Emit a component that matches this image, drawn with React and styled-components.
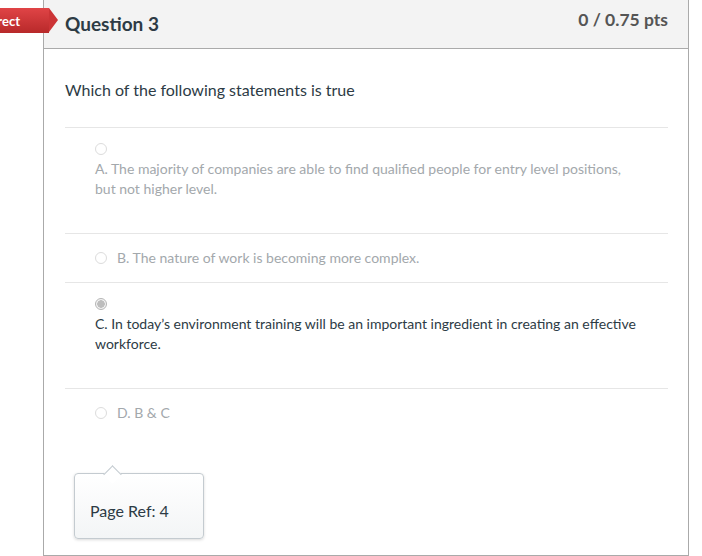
import React from 'react';
import styled, { createGlobalStyle } from 'styled-components';

const GlobalStyle = createGlobalStyle`
  html, body {
    margin: 0;
    padding: 0;
    background: #fff;
    font-family: Lato, "Open Sans", "Liberation Sans", sans-serif;
    color: #2d3b45;
  }
`;

const Page = styled.div`
  position: relative;
  width: 702px;
  height: 556px;
  overflow: hidden;
`;

const Card = styled.div`
  margin-left: 43px;
  width: 646px;
  height: 556px;
  box-sizing: border-box;
  border: 1px solid #aaaaaa;
  border-top: none;
  display: flex;
  flex-direction: column;
`;

const Header = styled.div`
  height: 49px;
  box-sizing: border-box;
  background: #f3f3f3;
  border-bottom: 1px solid #aaaaaa;
  display: flex;
  align-items: center;
  justify-content: space-between;
  padding: 0 20px 0 21px;
`;

const Title = styled.h2`
  margin: -2px 0 0;
  font-size: 19px;
  font-weight: 700;
  color: #2d3b45;
`;

const Points = styled.div`
  font-size: 17.5px;
  font-weight: 700;
  color: #555555;
  margin-top: -10px;
`;

const Badge = styled.div`
  position: absolute;
  top: 8px;
  left: -60px;
  width: 109px;
  height: 25px;
  box-sizing: border-box;
  padding-right: 29px;
  background: linear-gradient(#e04446, #b8292a);
  color: #fff;
  font-size: 13px;
  font-weight: 700;
  display: flex;
  align-items: center;
  justify-content: flex-end;

  &::after {
    content: '';
    position: absolute;
    right: -9px;
    top: 0;
    border-top: 12.5px solid transparent;
    border-bottom: 12.5px solid transparent;
    border-left: 9px solid #cc3436;
  }
`;

const Body = styled.div`
  padding: 30px 20px 0 21px;
  position: relative;
  flex: 1;
`;

const QuestionText = styled.p`
  margin: 0 0 26px;
  font-size: 16px;
  line-height: 22px;
`;

const Answers = styled.div`
  border-top: 1px solid #e6e6e6;
`;

const Answer = styled.div`
  border-bottom: ${({ last }) => (last ? 'none' : '1px solid #e6e6e6')};
  padding: ${({ stacked }) => (stacked ? '15px 28px 34px 30px' : '14px 28px 14px 30px')};
  display: flex;
  flex-direction: ${({ stacked }) => (stacked ? 'column' : 'row')};
  align-items: ${({ stacked }) => (stacked ? 'flex-start' : 'center')};
  gap: ${({ stacked }) => (stacked ? '4px' : '10px')};
`;

const Radio = styled.span`
  width: 12px;
  height: 12px;
  box-sizing: border-box;
  border-radius: 50%;
  border: 1px solid ${({ checked }) => (checked ? '#b5b5b5' : '#dcdcdc')};
  background: ${({ checked }) =>
    checked ? 'radial-gradient(circle, #bdbdbd 0 3.5px, #f2f2f2 4px)' : '#fff'};
  flex-shrink: 0;
`;

const AnswerText = styled.div`
  font-size: 14px;
  line-height: 20px;
  color: ${({ selected }) => (selected ? '#2d3b45' : '#a3a8ac')};
`;

const Popup = styled.div`
  position: relative;
  margin: 36px 0 0 9px;
  width: 130px;
  height: 66px;
  box-sizing: border-box;
  border: 1px solid #c4cbd0;
  border-radius: 4px;
  background: linear-gradient(#ffffff, #f3f5f6);
  box-shadow: 0 1px 3px rgba(0, 0, 0, 0.15);
  padding: 27px 0 0 15px;
  font-size: 16px;
  color: #2d3b45;

  &::before {
    content: '';
    position: absolute;
    top: -10px;
    left: 31px;
    width: 12px;
    height: 12px;
    background: #fff;
    border-left: 1px solid #c4cbd0;
    border-top: 1px solid #c4cbd0;
    transform: translateY(4px) rotate(45deg);
  }
`;

const answers = [
  {
    text: 'A. The majority of companies are able to find qualified people for entry level positions, but not higher level.',
    stacked: true,
  },
  { text: 'B. The nature of work is becoming more complex.' },
  {
    text: 'C. In today\u2019s environment training will be an important ingredient in creating an effective workforce.',
    stacked: true,
    selected: true,
  },
  { text: 'D. B & C', last: true },
];

const App = () => (
  <Page>
    <GlobalStyle />
    <Badge>Incorrect</Badge>
    <Card>
      <Header>
        <Title>Question 3</Title>
        <Points>0 / 0.75 pts</Points>
      </Header>
      <Body>
        <QuestionText>Which of the following statements is true</QuestionText>
        <Answers>
          {answers.map((a, i) => (
            <Answer key={i} stacked={a.stacked} last={a.last}>
              <Radio checked={a.selected} />
              <AnswerText selected={a.selected}>{a.text}</AnswerText>
            </Answer>
          ))}
        </Answers>
        <Popup>Page Ref: 4</Popup>
      </Body>
    </Card>
  </Page>
);

export default App;
